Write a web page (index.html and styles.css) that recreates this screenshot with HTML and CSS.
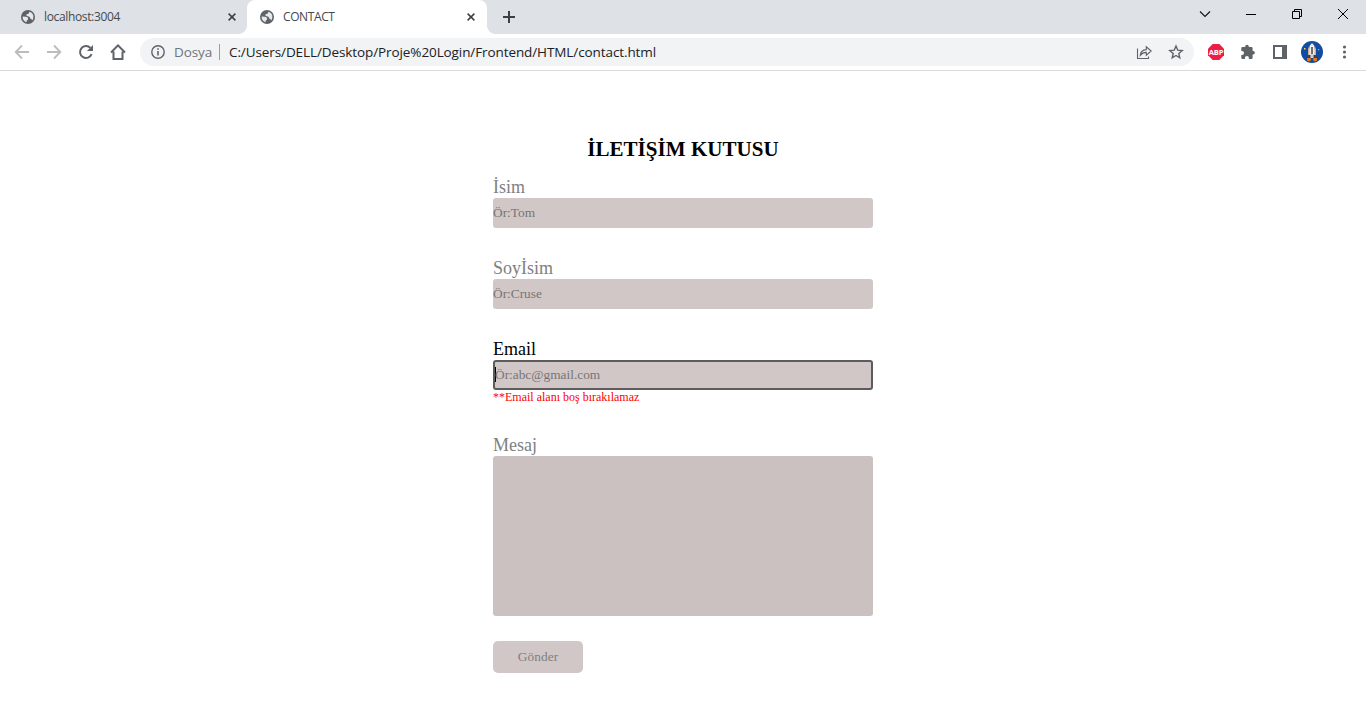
FILE: index.html
```html
<!DOCTYPE html>
<html lang="tr">
<head>
<meta charset="utf-8">
<title>CONTACT</title>
<link rel="stylesheet" href="styles.css">
</head>
<body>
<svg class="defs" width="0" height="0">
  <symbol id="globe" viewBox="0 0 14 14">
    <circle cx="7" cy="7" r="7" fill="#5f6368"/>
    <path d="M1.6 6.6 L4.6 6.8 Q7.3 6.9 7.1 9.1 L6.6 10 Q5.5 10 5.6 11.5 L5.7 12.3 Q1.7 11.1 1.6 6.6Z M8.3 1.7 Q12.4 2.8 12.4 7 Q12.3 9.2 11.1 10.5 Q10.8 8.8 9.1 8.6 L8.9 7.2 Q8 6.4 6.5 6.3 L5.2 5.2 Q5.3 4 6.8 4 Q8.4 3.8 8.3 1.7Z" fill="#e6e9ec"/>
  </symbol>
  <symbol id="cross" viewBox="0 0 8 8"><path d="M.6 .6 L7.4 7.4 M7.4 .6 L.6 7.4" stroke="#3c4043" stroke-width="1.5"/></symbol>
</svg>
<header class="chrome">
  <div class="tabstrip">
    <div class="tab">
      <svg class="favicon"><use href="#globe"/></svg>
      <span class="tab-title">localhost:3004</span>
      <svg class="tab-close"><use href="#cross"/></svg>
    </div>
    <div class="tab tab-active">
      <svg class="favicon"><use href="#globe"/></svg>
      <span class="tab-title tab-title-active">CONTACT</span>
      <svg class="tab-close"><use href="#cross"/></svg>
    </div>
    <svg class="new-tab" width="12" height="12" viewBox="0 0 12 12"><path d="M6 0V12M0 6H12" stroke="#3c4043" stroke-width="2"/></svg>
    <div class="window-controls">
      <svg width="12" height="12" viewBox="0 0 12 12"><path d="M1 3.5 L6 8.5 L11 3.5" fill="none" stroke="#111" stroke-width="1.1"/></svg>
      <svg width="12" height="12" viewBox="0 0 12 12"><path d="M1 6.5H11" stroke="#000"/></svg>
      <svg width="12" height="12" viewBox="0 0 12 12"><path d="M1.5 3.5H8.5V10.5H1.5Z M3.5 3.5V1.5H10.5V8.5H8.5" fill="none" stroke="#000"/></svg>
      <svg width="12" height="12" viewBox="0 0 12 12"><path d="M1 1L11 11M11 1L1 11" stroke="#000"/></svg>
    </div>
  </div>
  <div class="toolbar">
    <div class="nav">
      <svg width="16" height="16" viewBox="0 0 16 16"><path d="M15 8H2M8 1.5L1.7 8L8 14.5" fill="none" stroke="#babcbe" stroke-width="1.8"/></svg>
      <svg width="16" height="16" viewBox="0 0 16 16"><path d="M1 8H14M8 1.5L14.3 8L8 14.5" fill="none" stroke="#babcbe" stroke-width="1.8"/></svg>
      <svg width="16" height="16" viewBox="0 0 16 16"><path d="M13.6 10.2A6 6 0 1 1 12.4 3.9" fill="none" stroke="#5f6368" stroke-width="2"/><path d="M15 .9V7H8.9Z" fill="#5f6368"/></svg>
      <svg width="16" height="16" viewBox="0 0 16 16"><path d="M1 8.5L8 1.4L15 8.5M3.5 7.5V15H12.5V7.5" fill="none" stroke="#5f6368" stroke-width="2"/></svg>
    </div>
    <div class="address">
      <svg class="info" width="14" height="14" viewBox="0 0 14 14"><circle cx="7" cy="7" r="6.2" fill="none" stroke="#5f6368" stroke-width="1.4"/><path d="M7 6V10.6M7 3.3V4.8" stroke="#5f6368" stroke-width="1.6"/></svg>
      <span class="scheme">Dosya</span>
      <span class="divider"></span>
      <span class="url">C:/Users/DELL/Desktop/Proje%20Login/Frontend/HTML/contact.html</span>
      <svg class="share" width="16" height="16" viewBox="0 0 16 16"><path d="M1.5 4.5V14.5H12.5V12.5M4.3 11.3Q4.8 5.9 10.3 5.6V2.8L15.2 7L10.3 11.2V8.4Q6.5 8.3 4.3 11.3Z" fill="none" stroke="#5f6368" stroke-width="1.1"/></svg>
      <svg class="star" width="16" height="16" viewBox="0 0 16 16"><path d="M8 2L9.7 6.1L14.2 6.5L10.8 9.4L11.8 13.8L8 11.5L4.2 13.8L5.2 9.4L1.8 6.5L6.3 6.1Z" fill="none" stroke="#5f6368" stroke-width="1.4"/></svg>
    </div>
    <div class="extensions">
      <svg width="16" height="16" viewBox="0 0 16 16"><path d="M4.7 0H11.3L16 4.7V11.3L11.3 16H4.7L0 11.3V4.7Z" fill="#ed1e45"/><text class="abp" x="8" y="10.8" text-anchor="middle">ABP</text></svg>
      <svg width="16" height="16" viewBox="0 0 16 16"><path d="M1.3 4.2Q1.3 3 2.5 3H5.2V2.5A1.8 1.8 0 0 1 8.8 2.5V3H11.4Q12.6 3 12.6 4.2V7H13.1A1.8 1.8 0 0 1 13.1 10.6H12.6V13.7Q12.6 14.9 11.4 14.9H8.9V14A2 2 0 0 0 4.9 14V14.9H2.5Q1.3 14.9 1.3 13.7V11H2A2 2 0 0 0 2 7H1.3Z" fill="#5f6368"/></svg>
      <svg width="16" height="16" viewBox="0 0 16 16"><path d="M2 2H14V14H2Z" fill="#fff" stroke="#5f6368" stroke-width="2"/><path d="M10 2H14V14H10Z" fill="#5f6368"/></svg>
      <svg class="avatar" width="22" height="22" viewBox="0 0 22 22"><circle cx="11" cy="11" r="11" fill="#124ca0"/><path d="M7 15V8L8 5.5L9 8V15ZM13 15V8L14 5.5L15 8V15Z" fill="#c7b5a1"/><path d="M8.5 5L11 2L13.5 5V15H8.5Z" fill="#f3eee8"/><path d="M10 6H12V15H10Z" fill="#766a6e"/><path d="M7 14H15L17 17.5H5Z" fill="#39405c"/><path d="M9.5 13H12.5V17H9.5Z" fill="#d8cfc8"/><path d="M6 17H9.8V19.5L8 20.5L6 19.5ZM12.2 17H16V19.5L14 20.5L12.2 19.5Z" fill="#e57819"/><path d="M3 7H4.5V8.5H3Z" fill="#efd36c"/><path d="M17 8H18.2V9.2H17Z" fill="#91b6dc"/></svg>
      <svg width="16" height="16" viewBox="0 0 16 16"><g fill="#5f6368"><circle cx="8.5" cy="3" r="1.6"/><circle cx="8.5" cy="8" r="1.6"/><circle cx="8.5" cy="13" r="1.6"/></g></svg>
    </div>
  </div>
</header>
<main class="page">
  <form class="contact">
    <h2 class="heading">İLETİŞİM KUTUSU</h2>
    <div class="field">
      <label class="label">İsim</label>
      <div class="input">Ör:Tom</div>
    </div>
    <div class="field">
      <label class="label">Soyİsim</label>
      <div class="input">Ör:Cruse</div>
    </div>
    <div class="field field-email">
      <label class="label label-active">Email</label>
      <div class="input input-focus"><span class="caret"></span>Ör:abc@gmail.com</div>
      <p class="error">**Email alanı boş bırakılamaz</p>
    </div>
    <div class="field field-message">
      <label class="label">Mesaj</label>
      <div class="message"></div>
    </div>
    <button class="submit" type="button">Gönder</button>
  </form>
</main>
</body>
</html>
```
FILE: styles.css
```css
* { box-sizing: border-box; }
body { margin: 0; height: 728px; overflow: hidden; background: #fff; font-family: "Liberation Serif", serif; }
svg { display: block; flex: none; }
.defs { position: absolute; }
.chrome { height: 71px; border-bottom: 1px solid #d9dadc; font-family: "Open Sans", "Noto Sans", sans-serif; }
.tabstrip { display: flex; height: 34px; background: #dee1e6; }
.tab { display: flex; align-items: center; width: 247px; padding: 0 11px 0 21px; }
.tab-active { position: relative; width: 240px; padding: 0 12px 0 13px; background: #fff; border-radius: 8px 8px 0 0; }
.tab-active::before, .tab-active::after { content: ""; position: absolute; bottom: 0; width: 8px; height: 8px; }
.tab-active::before { left: -8px; background: radial-gradient(circle at 0 0, transparent 7.5px, #fff 8px); }
.tab-active::after { right: -8px; background: radial-gradient(circle at 100% 0, transparent 7.5px, #fff 8px); }
.favicon { width: 14px; height: 14px; }
.tab-title { flex: 1; margin: 0 0 1px 9px; font-size: 12px; letter-spacing: -0.35px; color: #45494d; white-space: nowrap; }
.tab-title-active { letter-spacing: -0.4px; }
.tab-close { width: 8px; height: 8px; }
.new-tab { margin: 11px 0 0 16px; }
.window-controls { display: flex; gap: 34px; margin: 8px 17px 0 auto; }
.toolbar { display: flex; align-items: center; height: 36px; padding-right: 14px; }
.nav { display: flex; gap: 16px; margin-left: 14px; }
.address { display: flex; align-items: center; width: 1054px; height: 28px; margin-left: 14px; padding: 0 10px 0 11px; background: #f1f3f4; border-radius: 14px; font-size: 14px; white-space: nowrap; }
.scheme { width: 38px; margin-left: 9px; color: #70757a; font-size: 13.5px; letter-spacing: -0.1px; }
.divider { width: 1px; height: 16px; margin: 0 9px 0 7px; background: #9a9da1; }
.url { color: #202124; font-size: 13.5px; letter-spacing: -0.095px; }
.share { margin-left: auto; }
.star { margin-left: 16px; }
.extensions { display: flex; align-items: center; gap: 16px; margin-left: auto; }
.avatar { margin: 0 -3px; }
.abp { font: bold 7.6px "Open Sans", sans-serif; letter-spacing: -0.2px; fill: #fff; }
.page { display: flex; justify-content: center; padding-top: 66px; }
.contact { width: 380px; }
.heading { margin: 0 0 16px; font-size: 21px; line-height: 24px; letter-spacing: 0.05px; text-align: center; }
.field { margin-bottom: 30px; }
.label { display: block; height: 21px; font-size: 18px; line-height: 21px; color: #808080; }
.label-active { color: #000; }
.input { display: flex; align-items: center; height: 30px; background: #d1c7c7; border-radius: 3px; font-size: 13.333px; color: #757575; }
.input-focus { border: 2px solid #5c5c5c; }
.caret { width: 1px; height: 15px; margin: 0 -1px 2px 0; background: #000; }
.error { height: 15px; margin: 0; font-size: 12px; line-height: 15px; color: #f00; }
.field-message { margin-bottom: 25px; }
.message { height: 160px; background: #cbc1c0; border-radius: 3px; }
.submit { display: block; width: 90px; height: 32px; padding: 0; border: 0; border-radius: 5px; background: #d1c7c7; color: #808080; font: 13.333px "Liberation Serif", serif; letter-spacing: 0.1px; }
```
